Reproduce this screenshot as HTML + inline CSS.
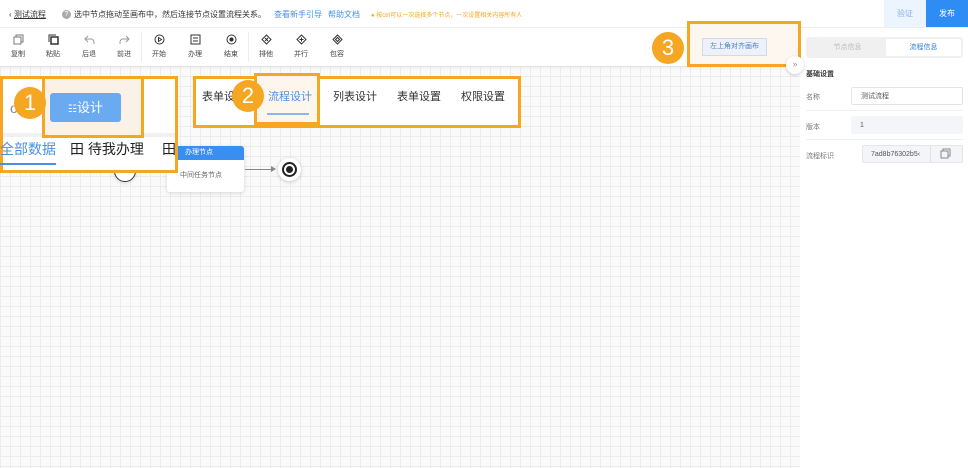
<!DOCTYPE html><html><head><meta charset="utf-8"><style>
*{margin:0;padding:0;box-sizing:border-box}
body{width:968px;height:468px;overflow:hidden;background:#fff;font-family:"Liberation Sans","Noto Sans CJK SC",sans-serif;position:relative;color:#333}
.a{position:absolute}
.canvas{left:0;top:66px;width:800px;height:402px;background-color:#fafafa;background-image:linear-gradient(#ececec 1px,transparent 1px),linear-gradient(90deg,#ececec 1px,transparent 1px);background-size:10px 10px}
.t{font-size:8px;white-space:nowrap}
.tool{position:absolute;top:34px;width:30px;text-align:center;font-size:7px;color:#444}
.tool svg{display:block;margin:0 auto 4px}
.circ{border-radius:50%;background:#f5a623;color:#fff;font-size:22px;text-align:center;font-family:"Liberation Sans",sans-serif}
.ob{border:3px solid #f5a623}
.inp{display:flex;align-items:center}
</style></head><body>
<div class="a canvas"></div>
<!-- top bar -->
<div class="a" style="left:0;top:0;width:968px;height:28px;background:#fff;border-bottom:1px solid #eee"></div>
<div class="a t" style="left:9px;top:9px;color:#333;">‹ <u>测试流程</u></div>
<div class="a" style="left:62px;top:10px;width:9px;height:9px;border-radius:50%;background:#aaa;color:#fff;font-size:7px;text-align:center;line-height:9px">?</div>
<div class="a t" style="left:74px;top:9px;color:#333">选中节点拖动至画布中，然后连接节点设置流程关系。</div>
<div class="a t" style="left:274px;top:9px;color:#4a90e2">查看新手引导</div>
<div class="a t" style="left:328px;top:9px;color:#4a90e2">帮助文档</div>
<div class="a" style="left:371px;top:10px;font-size:6px;color:#f5a623;white-space:nowrap">● 按ctrl可以一次选择多个节点，一次设置相关内容所有人</div>
<div class="a" style="left:884px;top:0;width:42px;height:27px;background:#ecf4fe;color:#8ab4e8;font-size:8px;text-align:center;line-height:27px">验证</div>
<div class="a" style="left:926px;top:0;width:42px;height:27px;background:#2f8cf5;color:#fff;font-size:8px;text-align:center;line-height:27px">发布</div>
<!-- toolbar -->
<div class="a" style="left:0;top:28px;width:800px;height:38px;background:#fff;box-shadow:0 2px 3px rgba(0,0,0,.05)"></div>
<div class="a" style="left:141px;top:32px;width:1px;height:30px;background:#eee"></div>
<div class="a" style="left:248px;top:32px;width:1px;height:30px;background:#eee"></div>
<div class="tool" style="left:3px"><svg width="11" height="11" viewBox="0 0 11 11" fill="none" stroke="#777"><rect x="1" y="3" width="7" height="7"/><path d="M3 3V1h7v7H8"/></svg>复制</div>
<div class="tool" style="left:38px"><svg width="11" height="11" viewBox="0 0 11 11" fill="none" stroke="#333"><rect x="3" y="3" width="7" height="7" stroke-width="1.5"/><path d="M1 8V1h7"/></svg>粘贴</div>
<div class="tool" style="left:74px"><svg width="11" height="11" viewBox="0 0 11 11" fill="none" stroke="#999"><path d="M4 2L1 5l3 3M1 5h6a3 3 0 0 1 3 3v2"/></svg>后退</div>
<div class="tool" style="left:109px"><svg width="11" height="11" viewBox="0 0 11 11" fill="none" stroke="#999"><path d="M7 2l3 3-3 3M10 5H4a3 3 0 0 0-3 3v2"/></svg>前进</div>
<div class="tool" style="left:144px"><svg width="11" height="11" viewBox="0 0 11 11" fill="none" stroke="#333"><circle cx="5.5" cy="5.5" r="4.5"/><path d="M4.5 3.5v4l3-2z"/></svg>开始</div>
<div class="tool" style="left:180px"><svg width="11" height="11" viewBox="0 0 11 11" fill="none" stroke="#333"><rect x="1" y="1" width="9" height="9"/><path d="M3 4h5M3 7h5"/></svg>办理</div>
<div class="tool" style="left:216px"><svg width="11" height="11" viewBox="0 0 11 11" fill="none" stroke="#333"><circle cx="5.5" cy="5.5" r="4.5"/><circle cx="5.5" cy="5.5" r="1.6" fill="#333"/></svg>结束</div>
<div class="tool" style="left:251px"><svg width="11" height="11" viewBox="0 0 11 11" fill="none" stroke="#333"><path d="M5.5 1l4.5 4.5-4.5 4.5L1 5.5z"/><path d="M4 4l3 3M7 4l-3 3"/></svg>排他</div>
<div class="tool" style="left:286px"><svg width="11" height="11" viewBox="0 0 11 11" fill="none" stroke="#333"><path d="M5.5 1l4.5 4.5-4.5 4.5L1 5.5z"/><path d="M5.5 3.5v4M3.5 5.5h4"/></svg>并行</div>
<div class="tool" style="left:322px"><svg width="11" height="11" viewBox="0 0 11 11" fill="none" stroke="#333"><path d="M5.5 1l4.5 4.5-4.5 4.5L1 5.5z"/><path d="M5.5 3.5l2 2-2 2-2-2z"/></svg>包容</div>
<!-- right panel -->
<div class="a" style="left:800px;top:28px;width:168px;height:440px;background:#fff"></div>
<!-- box 3 -->
<div class="a ob" style="left:687px;top:21px;width:114px;height:46px;background:#fdf7ef"></div>
<div class="a" style="left:702px;top:38px;width:65px;height:18px;background:#eef2f8;border:1px solid #c9ddf2;font-size:7px;color:#4a7fc0;text-align:center;line-height:16px">左上角对齐画布</div>
<div class="a circ" style="left:652px;top:32px;width:32px;height:32px;line-height:32px">3</div>
<div class="a" style="left:786px;top:56px;width:18px;height:18px;border-radius:50%;background:#fff;box-shadow:0 1px 3px rgba(0,0,0,.2);font-size:9px;color:#999;text-align:center;line-height:17px">»</div>
<div class="a" style="left:806px;top:37px;width:157px;height:21px;background:#f0f0f0;border-radius:3px"></div>
<div class="a" style="left:886px;top:39px;width:75px;height:17px;background:#fff;border-radius:2px;font-size:7px;color:#2f7ad6;text-align:center;line-height:17px">流程信息</div>
<div class="a" style="left:810px;top:39px;width:75px;height:17px;font-size:7px;color:#bbb;text-align:center;line-height:17px">节点信息</div>
<div class="a" style="left:806px;top:69px;font-size:7px;color:#333;font-weight:bold">基础设置</div>
<div class="a" style="left:806px;top:92px;font-size:7px;color:#777">名称</div>
<div class="a inp" style="left:851px;top:87px;width:112px;height:18px;border:1px solid #e3e3e3;border-radius:2px;font-size:7px;color:#555;padding-left:9px">测试流程</div>
<div class="a" style="left:806px;top:110px;width:157px;height:1px;background:#f0f0f0"></div>
<div class="a" style="left:806px;top:122px;font-size:7px;color:#777">版本</div>
<div class="a inp" style="left:851px;top:116px;width:112px;height:18px;background:#f3f5f8;border-radius:2px;font-size:7px;color:#555;padding-left:9px">1</div>
<div class="a" style="left:806px;top:139px;width:157px;height:1px;background:#f0f0f0"></div>
<div class="a" style="left:806px;top:151px;font-size:7px;color:#777">流程标识</div>
<div class="a inp" style="left:862px;top:145px;width:101px;height:18px;background:#f3f5f8;border:1px solid #e6e6e6;border-radius:2px;font-size:7px;color:#555;padding-left:8px">7ad8b76302b5‹</div>
<div class="a" style="left:930px;top:146px;width:1px;height:16px;background:#e3e3e3"></div>
<svg class="a" style="left:940px;top:148px" width="11" height="11" viewBox="0 0 11 11" fill="none" stroke="#888"><rect x="1" y="3" width="7" height="7"/><path d="M3 3V1h7v7H8"/></svg>
<!-- flow -->
<div class="a" style="left:114px;top:160px;width:22px;height:22px;border-radius:50%;background:#fff;border:1px solid #333;box-shadow:0 1px 4px rgba(0,0,0,.15)"></div>
<div class="a" style="left:167px;top:146px;width:77px;height:46px;background:#fff;border-radius:3px;box-shadow:0 1px 4px rgba(0,0,0,.15);overflow:hidden">
<div style="height:14px;background:#3a8ef0;color:#fff;font-size:7px;line-height:14px;padding-left:18px">办理节点</div>
<div style="font-size:7px;color:#666;padding:10px 0 0 13px">中间任务节点</div></div>
<div class="a" style="left:245px;top:169px;width:28px;height:1px;background:#888"></div>
<div class="a" style="left:271px;top:166px;border-left:5px solid #888;border-top:3px solid transparent;border-bottom:3px solid transparent"></div>
<div class="a" style="left:278px;top:158px;width:23px;height:23px;border-radius:50%;background:#fff;box-shadow:0 1px 4px rgba(0,0,0,.2)"></div>
<div class="a" style="left:282px;top:162px;width:15px;height:15px;border-radius:50%;border:2px solid #222"></div>
<div class="a" style="left:286px;top:166px;width:7px;height:7px;border-radius:50%;background:#222"></div>
<!-- box 1 -->
<div class="a ob" style="left:0;top:76px;width:178px;height:97px;background:#fff"></div>
<div class="a" style="left:3px;top:133px;width:172px;height:4px;background:#f0f0f0"></div>
<div class="a ob" style="left:42px;top:76px;width:102px;height:62px;background:#faf2e8"></div>
<div class="a" style="left:50px;top:93px;width:71px;height:29px;background:#6aaaf0;border-radius:3px;color:#fff;font-size:13px;text-align:center;line-height:29px"><span style="font-size:10px">☷</span>设计</div>
<div class="a" style="left:10px;top:100px;font-size:14px;color:#888">o</div>
<div class="a circ" style="left:14px;top:87px;width:32px;height:32px;line-height:32px">1</div>
<div class="a" style="left:0;top:139px;font-size:14px;color:#4a90e2;white-space:nowrap">全部数据</div>
<div class="a" style="left:0;top:163px;width:56px;height:2px;background:#4a90e2"></div>
<div class="a" style="left:70px;top:139px;font-size:14px;color:#222;white-space:nowrap">田 待我办理</div>
<div class="a" style="left:162px;top:139px;font-size:14px;color:#222">田</div>
<!-- box 2 -->
<div class="a ob" style="left:193px;top:76px;width:328px;height:52px;background:#fff"></div>
<div class="a" style="left:202px;top:88px;font-size:11px;color:#333">表单设</div>
<div class="a ob" style="left:254px;top:73px;width:66px;height:52px;background:#fdf6ec"></div>
<div class="a" style="left:268px;top:88px;font-size:11px;color:#4a90e2">流程设计</div>
<div class="a" style="left:267px;top:113px;width:42px;height:2px;background:#8ab8ee"></div>
<div class="a" style="left:333px;top:88px;font-size:11px;color:#333">列表设计</div>
<div class="a" style="left:397px;top:88px;font-size:11px;color:#333">表单设置</div>
<div class="a" style="left:461px;top:88px;font-size:11px;color:#333">权限设置</div>
<div class="a circ" style="left:232px;top:80px;width:32px;height:32px;line-height:32px">2</div>
</body></html>
